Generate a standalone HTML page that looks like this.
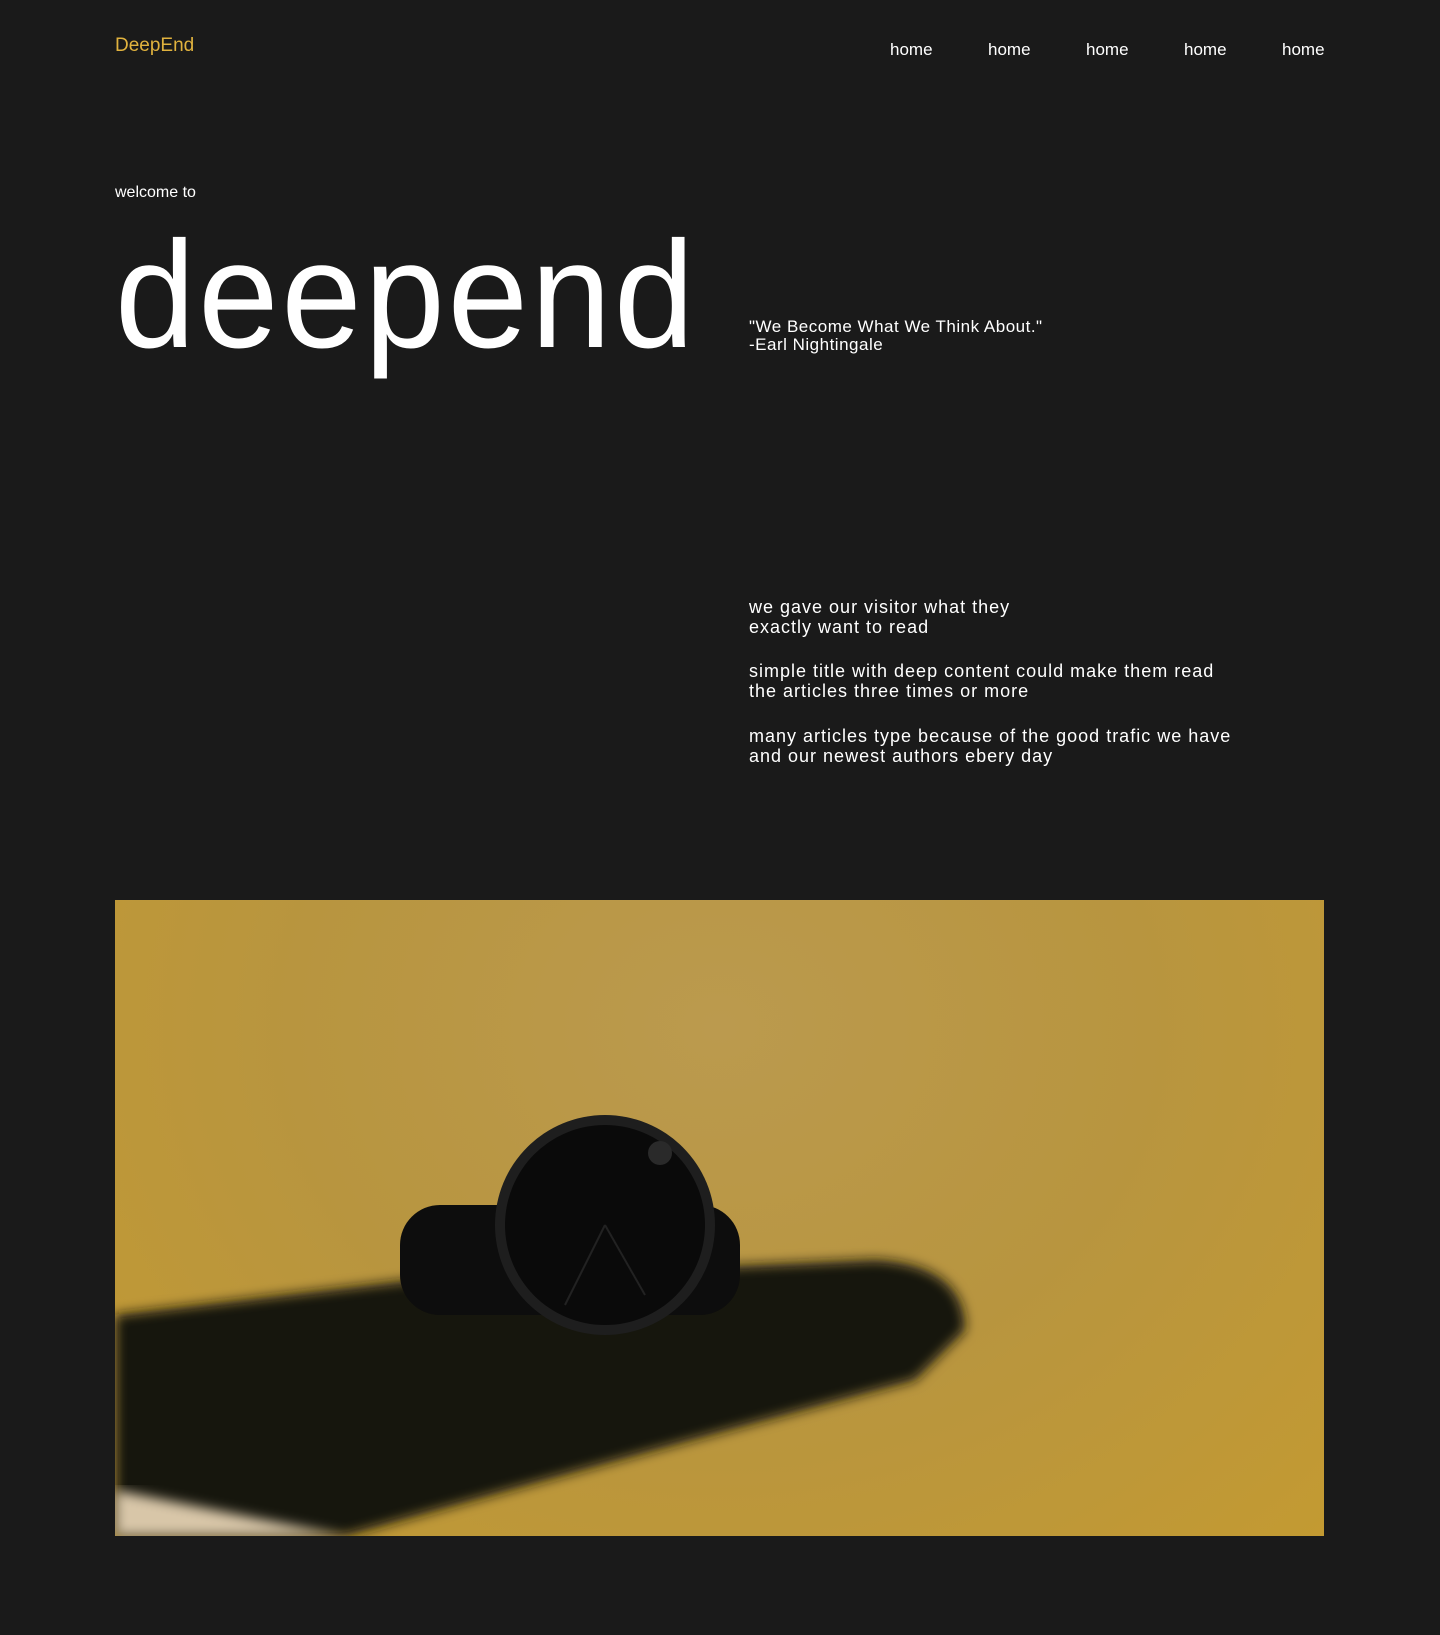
<!DOCTYPE html>
<html><head><meta charset="utf-8"><style>
*{margin:0;padding:0;box-sizing:border-box}
body{width:1440px;height:1635px;background:#1a1a1a;font-family:"Liberation Sans",sans-serif;color:#fff;position:relative;overflow:hidden}
.a{position:absolute;white-space:nowrap}
.logo{left:115px;top:35px;font-size:19px;color:#e0b23e}
.nav{top:40px;font-size:17px}
.big{left:115px;top:219px;font-size:152px;line-height:1;letter-spacing:3px;transform:scaleX(0.95);transform-origin:left top}
.p{left:749px;font-size:18px;line-height:20px;letter-spacing:1px}
.img{position:absolute;left:115px;top:900px;width:1209px;height:636px;overflow:hidden;background:radial-gradient(ellipse at 50% 20%,#bb9a4e 0%,#b8953f 50%,#c39a32 100%)}
</style></head><body>
<div class="a logo">DeepEnd</div>
<div class="a nav" style="left:890px">home</div>
<div class="a nav" style="left:988px">home</div>
<div class="a nav" style="left:1086px">home</div>
<div class="a nav" style="left:1184px">home</div>
<div class="a nav" style="left:1282px">home</div>
<div class="a" style="left:115px;top:184px;font-size:16px">welcome to</div>
<div class="a big">deepend</div>
<div class="a p" style="top:318px;font-size:17px;line-height:18px;letter-spacing:.5px">"We Become What We Think About."<br>-Earl Nightingale</div>
<div class="a p" style="top:597px">we gave our visitor what they<br>exactly want to read</div>
<div class="a p" style="top:661px">simple title with deep content could make them read<br>the articles three times or more</div>
<div class="a p" style="top:726px">many articles type because of the good trafic we have<br>and our newest authors ebery day</div>
<div class="img">
<svg width="1209" height="636" viewBox="0 0 1209 636">
<defs><filter id="b"><feGaussianBlur stdDeviation="6"/></filter></defs>
<path d="M0 415 L300 380 L760 360 Q850 365 850 430 L800 480 Q500 560 230 636 L0 636 Z" fill="#141310" filter="url(#b)"/>
<path d="M0 590 L230 636 L0 636Z" fill="#d8c6a8" filter="url(#b)"/>
<rect x="285" y="305" width="340" height="110" rx="40" fill="#0d0d0d"/>
<circle cx="490" cy="325" r="110" fill="#1e1e1e"/>
<circle cx="490" cy="325" r="100" fill="#0a0a0a"/>
<circle cx="545" cy="253" r="12" fill="#2a2a2a"/>
<line x1="490" y1="325" x2="450" y2="405" stroke="#222" stroke-width="2"/>
<line x1="490" y1="325" x2="530" y2="395" stroke="#222" stroke-width="2"/>
</svg>
</div>
</body></html>
